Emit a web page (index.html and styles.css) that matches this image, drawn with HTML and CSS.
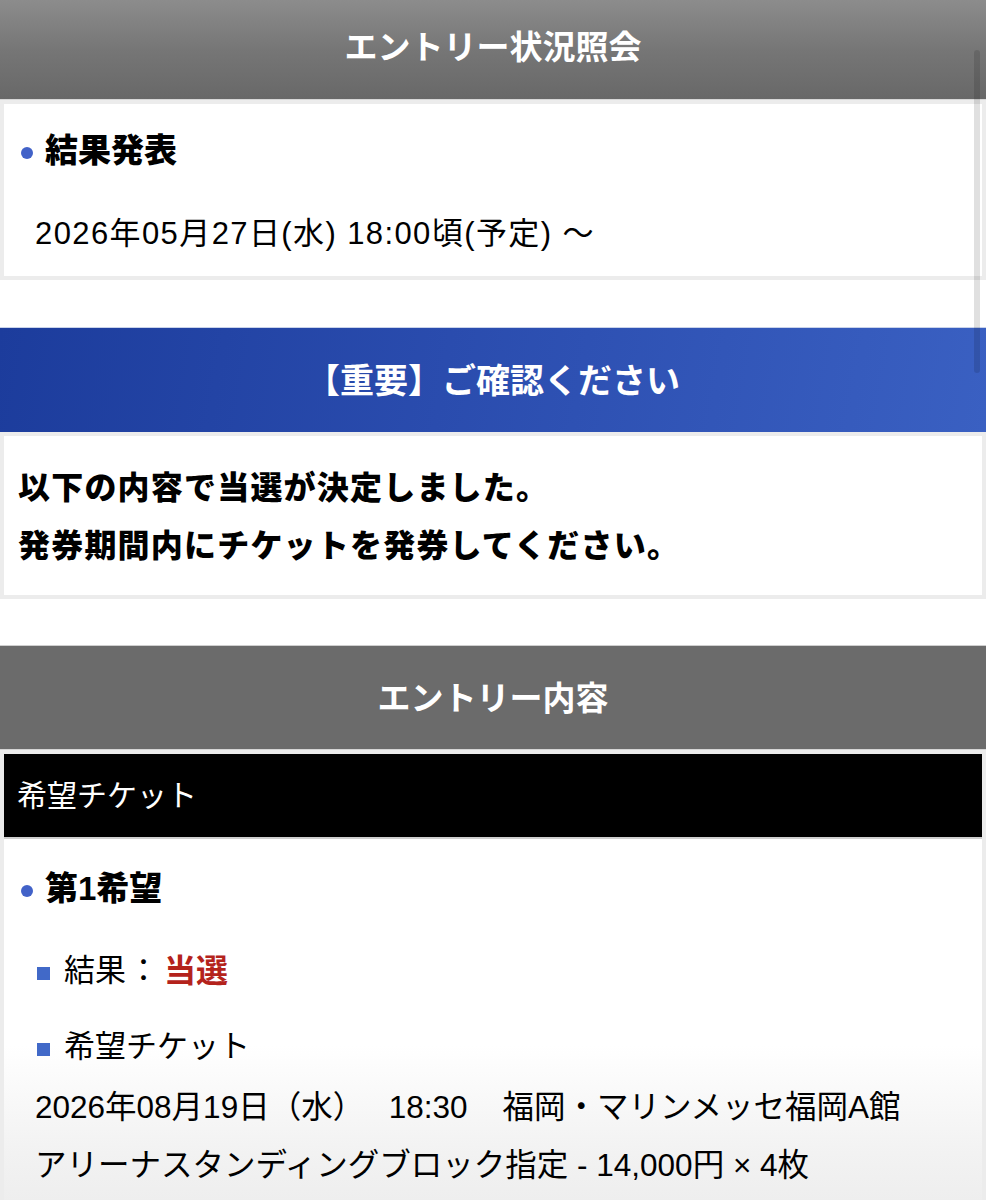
FILE: index.html
```html
<!DOCTYPE html>
<html lang="ja">
<head>
<meta charset="utf-8">
<title>エントリー状況照会</title>
<link rel="stylesheet" href="styles.css">
</head>
<body>
<div class="page">
  <header class="bar bar-grey-grad"><h1 class="bar-title">エントリー状況照会</h1></header>
  <section class="card card-result">
    <h2 class="sec-title"><span class="dot"></span>結果発表</h2>
    <p class="date-line">2026年05月27日(水) 18:00頃(予定) 〜</p>
  </section>

  <header class="bar bar-blue"><h1 class="bar-title">【重要】ご確認ください</h1></header>
  <section class="card card-notice">
    <p class="notice">以下の内容で当選が決定しました。</p>
    <p class="notice">発券期間内にチケットを発券してください。</p>
  </section>

  <header class="bar bar-grey"><h1 class="bar-title">エントリー内容</h1></header>
  <section class="card card-entry">
    <div class="black-bar">希望チケット</div>
    <div class="entry-body">
      <h2 class="sec-title"><span class="dot"></span>第1希望</h2>
      <p class="item item-result"><span class="sq"></span>結果<span class="colon">：</span><span class="won">当選</span></p>
      <p class="item item-ticket"><span class="sq"></span>希望チケット</p>
      <p class="detail detail-first">2026年08月19日（水）　&nbsp;18:30&nbsp;&nbsp;&nbsp;&nbsp;福岡・マリンメッセ福岡A館</p>
      <p class="detail">アリーナスタンディングブロック指定 - 14,000円 × 4枚</p>
    </div>
  </section>
  <div class="scroll-thumb"></div>
</div>
</body>
</html>
```

FILE: styles.css
```css
html, body {
  margin: 0;
  padding: 0;
  background: #ffffff;
}
body {
  font-family: "Liberation Sans", "Noto Sans CJK JP", "Noto Sans", sans-serif;
  color: #000;
}
.page {
  position: relative;
  width: 986px;
  min-height: 1200px;
  overflow: hidden;
  background: #ffffff;
}
h1, h2, p { margin: 0; }

.bar {
  display: flex;
  align-items: center;
  justify-content: center;
  box-sizing: border-box;
}
.bar-title {
  color: #fff;
  font-weight: 700;
  font-size: 33px;
  line-height: 40px;
}
.bar-grey-grad {
  height: 100px;
  padding-bottom: 4px;
  background: linear-gradient(to bottom, #8c8c8c 0%, #767676 50%, #686868 100%);
  border-bottom: 1px solid #d8d8d8;
}
.bar-blue {
  height: 105px;
  margin-top: 47px;
  padding-top: 2px;
  background: linear-gradient(100deg, #1c3c9c 0%, #2a4cae 45%, #3a60c2 100%);
  border-top: 1px solid #c9d3ea;
}
.bar-blue .bar-title { font-size: 34px; }
.bar-grey {
  height: 105px;
  margin-top: 46px;
  padding-top: 2px;
  background: #6b6b6b;
  border-top: 1px solid #cfcfcf;
  border-bottom: 1px solid #d5d5d5;
}
.bar-grey .bar-title { font-size: 33px; }

.card {
  box-sizing: border-box;
  border: 4px solid #ececec;
  background: #fff;
}
.card-result {
  padding: 24px 14px 22px;
}
.sec-title {
  display: flex;
  align-items: center;
  font-size: 33px;
  font-weight: 900;
  line-height: 46px;
}
.dot {
  width: 12px;
  height: 12px;
  border-radius: 50%;
  background: #4262c8;
  margin-right: 12px;
  margin-top: 4px;
  flex: none;
}
.card-result .sec-title,
.entry-body .sec-title { padding-left: 3px; }
.date-line {
  margin-top: 40px;
  padding-left: 17px;
  font-size: 31px;
  line-height: 40px;
  letter-spacing: 1.4px;
}

.card-notice {
  padding: 23px 10px 20px;
}
.notice {
  font-size: 32px;
  font-weight: 900;
  line-height: 58px;
  letter-spacing: 1.2px;
  padding-left: 4px;
}

.card-entry {
  min-height: 460px;
  background: linear-gradient(to bottom, #ffffff 0%, #ffffff 62%, #f2f2f2 85%, #ececec 100%);
}
.black-bar {
  height: 83px;
  background: #000;
  color: #fff;
  font-size: 30px;
  line-height: 83px;
  padding-left: 13px;
  border-bottom: 2px solid #cfcfcf;
}
.entry-body {
  padding: 27px 14px 30px;
}
.item {
  display: flex;
  align-items: center;
  font-size: 31px;
  line-height: 46px;
  padding-left: 19px;
}
.item-result { margin-top: 36px; }
.item-ticket { margin-top: 30px; }
.colon {
  margin: 0 5px 0 2px;
}
.sq {
  width: 13px;
  height: 13px;
  background: #4169c8;
  margin-right: 14px;
  margin-top: 4px;
  flex: none;
}
.won {
  color: #b4231c;
  font-weight: 700;
  font-size: 32px;
}
.detail {
  font-size: 31.5px;
  line-height: 58px;
  padding-left: 17px;
  white-space: nowrap;
}
.detail-first { margin-top: 8px; }

.scroll-thumb {
  position: absolute;
  left: 974px;
  top: 50px;
  width: 6px;
  height: 323px;
  border-radius: 3px;
  background: rgba(0, 0, 0, 0.12);
}
```
